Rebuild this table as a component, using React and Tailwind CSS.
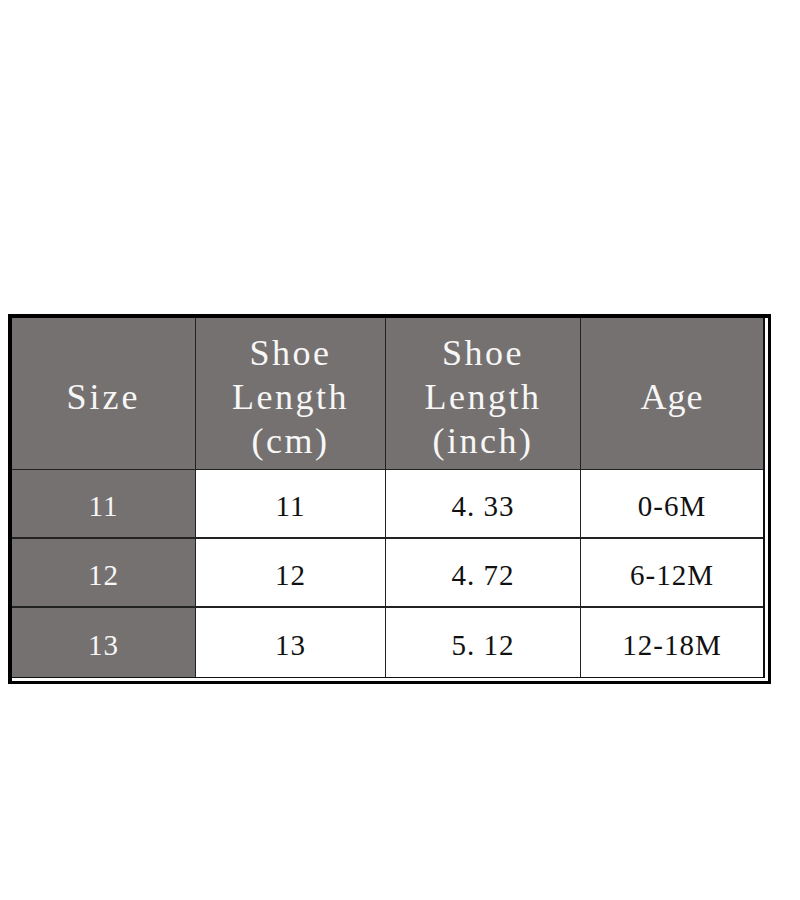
import React from "react";

const rows = [
  { size: "11", cm: "11", inch: "4. 33", age: "0-6M" },
  { size: "12", cm: "12", inch: "4. 72", age: "6-12M" },
  { size: "13", cm: "13", inch: "5. 12", age: "12-18M" },
];

const App = () => {
  return (
    <div className="min-h-[900px] w-[800px] bg-white pt-[314px] font-['Liberation_Serif',serif]">
      <div className="ml-2 w-[763px] border-t-4 border-r-[3px] border-b-[3px] border-l-4 border-black pr-[3px] pb-[3px]">
        <div className="grid grid-cols-[184px_190px_195px_182px] border-r-2 border-b border-[#111]">
          {/* header */}
          <div className="flex h-[152px] items-center justify-center border-r border-b border-[#222] bg-[#767171] pt-[7px] text-[36px] tracking-[3px] text-[#f7f7f7]">
            Size
          </div>
          <div className="flex h-[152px] flex-col items-center justify-center border-r border-b border-[#222] bg-[#767171] pt-[6px] text-center text-[36px] leading-[44px] tracking-[2.5px] text-[#f7f7f7]">
            <span>Shoe</span>
            <span>Length</span>
            <span>(cm)</span>
          </div>
          <div className="flex h-[152px] flex-col items-center justify-center border-r border-b border-[#222] bg-[#767171] pt-[6px] text-center text-[36px] leading-[44px] tracking-[2.5px] text-[#f7f7f7]">
            <span>Shoe</span>
            <span>Length</span>
            <span>(inch)</span>
          </div>
          <div className="flex h-[152px] items-center justify-center border-b border-[#222] bg-[#767171] pt-[7px] text-[36px] tracking-[1px] text-[#f7f7f7]">
            Age
          </div>

          {rows.map((r, i) => (
            <React.Fragment key={r.size}>
              <div
                className={`flex h-[69px] items-center justify-center border-r border-[#222] bg-[#767171] pt-[6px] text-[29px] tracking-[1px] text-[#f7f7f7] ${
                  i < 2 ? "border-b-2" : ""
                }`}
              >
                {r.size}
              </div>
              <div
                className={`flex h-[69px] items-center justify-center border-r border-[#222] pt-[6px] text-[29px] tracking-[1px] text-[#111] ${
                  i < 2 ? "border-b-2" : ""
                }`}
              >
                {r.cm}
              </div>
              <div
                className={`flex h-[69px] items-center justify-center border-r border-[#222] pt-[6px] text-[29px] tracking-[1px] text-[#111] ${
                  i < 2 ? "border-b-2" : ""
                }`}
              >
                {r.inch}
              </div>
              <div
                className={`flex h-[69px] items-center justify-center border-[#222] pt-[6px] text-[29px] tracking-[1px] text-[#111] ${
                  i < 2 ? "border-b-2" : ""
                }`}
              >
                {r.age}
              </div>
            </React.Fragment>
          ))}
        </div>
      </div>
    </div>
  );
};

export default App;
